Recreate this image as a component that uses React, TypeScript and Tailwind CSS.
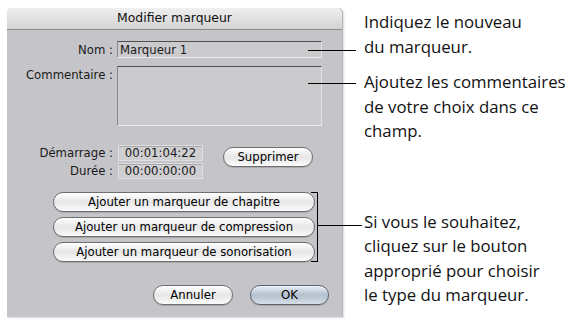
const ui = "font-['DejaVu_Sans','Liberation_Sans',sans-serif]";

const aquaBtn =
	"flex items-center justify-center rounded-full border border-[#6e6e6e] bg-linear-to-b from-[#ffffff] via-[#e6e6e6] to-[#fbfbfb] text-[11.7px] text-black shadow-[inset_0_1px_0_#fff,0_1px_1px_rgba(0,0,0,0.15)]";

const okBtn =
	"flex items-center justify-center rounded-full border border-[#59626e] bg-linear-to-b from-[#e8eef5] via-[#b4c0ce] to-[#d6dee8] text-[11.7px] text-black shadow-[inset_0_1px_0_#f4f7fa,0_1px_1px_rgba(0,0,0,0.15)]";

const field =
	"bg-[#cbcbce] border border-t-[#4f4f4f] border-l-[#8a8a8a] border-r-[#e0e0e0] border-b-[#ececec]";

function TimeField({ value }: { value: string }) {
	return (
		<div className="w-[85px] h-[16px] flex items-center justify-center bg-[#cfcfd1] border border-[#dedee0] shadow-[inset_0_1px_0_#a8a8aa] text-[11.7px] text-[#1a1a1a]">
			{value}
		</div>
	);
}

function Dialog() {
	return (
		<div className={`mt-[8px] ml-[7px] w-[336px] h-[309px] flex flex-col rounded-t-[5px] bg-[#c5c5c9] border-r border-[#b8b8bc] shadow-[1px_1px_2px_rgba(0,0,0,0.15)] ${ui}`}>
			<div className="h-[22px] flex items-center justify-center rounded-t-[5px] border-b border-[#8c8c8c] bg-linear-to-b from-[#efefef] to-[#d3d3d3] text-[12.4px] text-[#111]">
				Modifier marqueur
			</div>
			<div className="flex flex-col text-[11.7px] leading-[16px] text-[#1a1a1a]">
				<div className="flex items-center mt-[11px]">
					<div className="w-[106px] text-right">Nom :</div>
					<div className={`ml-[4px] w-[205px] h-[17px] flex items-center pl-[2px] ${field}`}>
						Marqueur 1
					</div>
				</div>
				<div className="flex items-start mt-[8px]">
					<div className="w-[106px] text-right pt-[1px]">Commentaire :</div>
					<div className={`ml-[4px] w-[205px] h-[60px] ${field}`} />
				</div>
				<div className="flex items-start mt-[19px]">
					<div className="flex flex-col gap-[2px]">
						<div className="flex items-center">
							<div className="w-[106px] text-right">Démarrage :</div>
							<div className="ml-[5px]">
								<TimeField value="00:01:04:22" />
							</div>
						</div>
						<div className="flex items-center">
							<div className="w-[106px] text-right">Durée :</div>
							<div className="ml-[5px]">
								<TimeField value="00:00:00:00" />
							</div>
						</div>
					</div>
					<div className={`ml-[20px] mt-[2px] w-[90px] h-[20px] ${aquaBtn}`}>Supprimer</div>
				</div>
				<div className="flex flex-col gap-[5px] ml-[46px] mt-[13px]">
					<div className={`w-[262px] h-[20px] ${aquaBtn}`}>Ajouter un marqueur de chapitre</div>
					<div className={`w-[262px] h-[20px] ${aquaBtn}`}>Ajouter un marqueur de compression</div>
					<div className={`w-[262px] h-[20px] ${aquaBtn}`}>Ajouter un marqueur de sonorisation</div>
				</div>
				<div className="flex ml-[146px] mt-[23px] gap-[17px]">
					<div className={`w-[80px] h-[20px] ${aquaBtn}`}>Annuler</div>
					<div className={`w-[79px] h-[20px] ${okBtn}`}>OK</div>
				</div>
			</div>
		</div>
	);
}

export default function App() {
	return (
		<div className="relative w-[587px] h-[320px] overflow-hidden bg-white flex">
			<Dialog />
			{/* callouts */}
			<div className="ml-[21px] pt-[10px] flex flex-col text-[16.8px] leading-[24.5px] text-[#111] font-['Open_Sans',sans-serif]">
				<div>
					<div>Indiquez le nouveau</div>
					<div>du marqueur.</div>
				</div>
				<div className="mt-[11px]">
					<div>Ajoutez les commentaires</div>
					<div>de votre choix dans ce</div>
					<div>champ.</div>
				</div>
				<div className="mt-[66px]">
					<div>Si vous le souhaitez,</div>
					<div>cliquez sur le bouton</div>
					<div>approprié pour choisir</div>
					<div>le type du marqueur.</div>
				</div>
			</div>
			<div className="absolute left-[308px] top-[50px] w-[48px] h-px bg-black" />
			<div className="absolute left-[308px] top-[83px] w-[48px] h-px bg-black" />
			<div className="absolute left-[311px] top-[192px] w-[7px] h-[70px] border-y border-r border-black" />
			<div className="absolute left-[318px] top-[225px] w-[44px] h-px bg-black" />
		</div>
	);
}
